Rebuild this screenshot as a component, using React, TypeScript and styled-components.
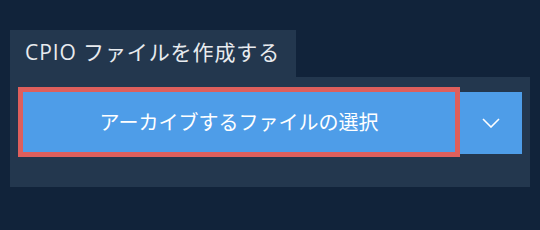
import React from 'react';
import styled, { createGlobalStyle } from 'styled-components';

const GlobalStyle = createGlobalStyle`
  html, body {
    margin: 0;
    padding: 0;
    background: #11233a;
    width: 540px;
    height: 230px;
    overflow: hidden;
  }
  body {
    font-family: "Open Sans", "Noto Sans CJK JP", sans-serif;
  }
`;

const Page = styled.div`
  padding: 30px 10px 0 10px;
`;

const Tab = styled.div`
  display: flex;
  align-items: center;
  width: 286px;
  height: 47px;
  box-sizing: border-box;
  padding: 0 0 5px 15px;
  background: #23374e;
  color: #e8ebef;
  font-size: 21px;
  letter-spacing: 0.9px;
  white-space: nowrap;
`;

const Panel = styled.div`
  display: flex;
  align-items: flex-start;
  height: 110px;
  box-sizing: border-box;
  padding: 10px 0 0 8px;
  background: #23374e;
`;

const MainButton = styled.button<{ focused?: boolean }>`
  width: 442px;
  height: 70px;
  box-sizing: border-box;
  border: 5px solid ${p => (p.focused ? '#de5f5c' : 'transparent')};
  background: #4e9de8;
  color: #ffffff;
  font-family: "Open Sans", "Noto Sans CJK JP", sans-serif;
  font-size: 20px;
  padding: 0 0 2px 0;
  cursor: pointer;
`;

const ArrowButton = styled.button`
  display: flex;
  align-items: center;
  justify-content: center;
  width: 62px;
  height: 62px;
  margin-top: 5px;
  border: none;
  padding: 0;
  background: #4e9de8;
  cursor: pointer;
`;

const Chevron = () => (
  <svg width="18" height="10" viewBox="0 0 18 10" fill="none">
    <path d="M1 1 L9 9 L17 1" stroke="#ffffff" strokeWidth="1.6" />
  </svg>
);

export default function App() {
  return (
    <>
      <GlobalStyle />
      <Page>
        <Tab>CPIO ファイルを作成する</Tab>
        <Panel>
          <MainButton focused>アーカイブするファイルの選択</MainButton>
          <ArrowButton aria-label="その他">
            <Chevron />
          </ArrowButton>
        </Panel>
      </Page>
    </>
  );
}
